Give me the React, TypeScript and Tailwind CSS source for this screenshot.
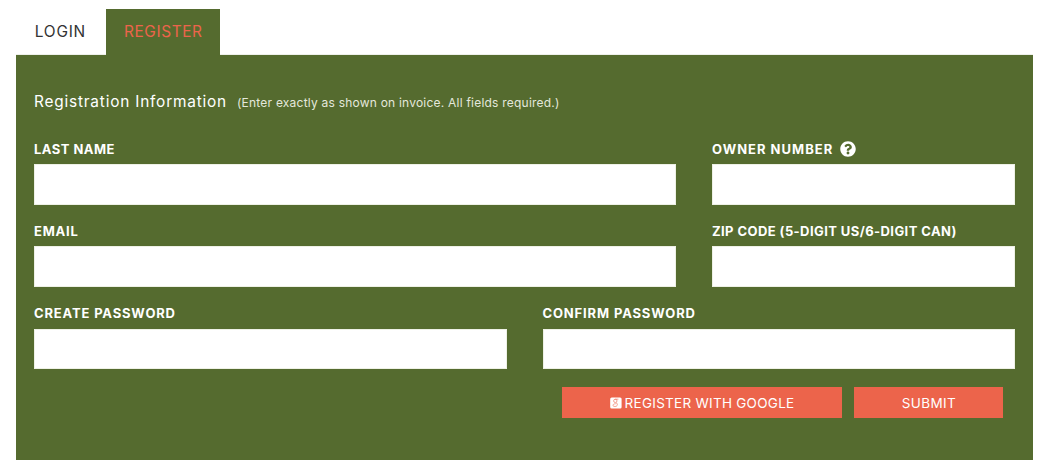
import React from "react";
import { FaQuestionCircle } from "react-icons/fa";

interface FieldProps {
  id: string;
  label: string;
  labelClassName: string;
  className: string;
  inputClassName?: string;
  type?: string;
  icon?: React.ReactNode;
}

const Field: React.FC<FieldProps> = ({
  id,
  label,
  labelClassName,
  className,
  inputClassName = "h-[41px]",
  type = "text",
  icon,
}) => (
  <div className={className}>
    <label
      htmlFor={id}
      className="flex h-[30px] items-center gap-[7px] whitespace-nowrap text-[13px] font-bold text-white"
    >
      <span className={`pt-0.5 ${labelClassName}`}>{label}</span>
      {icon}
    </label>
    <input
      id={id}
      type={type}
      className={`block w-full border border-[#eef1e6] bg-white px-3 text-sm text-gray-800 outline-none ${inputClassName}`}
    />
  </div>
);

const GoogleSquareIcon: React.FC = () => (
  <svg viewBox="0 0 12 12" className="-mt-px h-3 w-3 shrink-0" fill="none">
    <rect x="0.2" y="0.4" width="11.4" height="11.2" rx="1.5" fill="#fff" />
    <g stroke="#ec644b" strokeWidth="0.6">
      <ellipse cx="5.3" cy="3.9" rx="1.7" ry="1.6" />
      <path d="M5.2 2.2h3.2M6 5.5c2.2 1.5 1.6 4-1 4-2.8 0-2.9-2.7.8-2.8" />
    </g>
  </svg>
);

const App: React.FC = () => {
  return (
    <div className="h-[475px] bg-white pl-4 pr-[18px] pt-[9px] font-['Inter',sans-serif]">
      <div className="flex h-[46px] border-b border-[#eef0ea] text-[15.4px]">
        <button className="w-[90px] whitespace-nowrap pr-0.5 text-[#333]">
          <span className="-mr-[0.8px] tracking-[0.8px]">LOGIN</span>
        </button>
        <button className="h-[46px] w-[114px] whitespace-nowrap bg-[#556b2f] text-[#ec644b]">
          <span className="-mr-[0.6px] tracking-[0.6px]">REGISTER</span>
        </button>
      </div>

      <form className="h-[405px] bg-[#556b2f] px-[18px] pt-[34px]">
        <div className="flex h-[45px] items-start gap-2.5 whitespace-nowrap leading-[26px]">
          <h2 className="text-[15.4px] text-white">
            <span className="tracking-[0.8px]">Registration Information</span>
          </h2>
          <span className="pt-px text-[12px] tracking-[0.22px] text-[#e4e8dc]">
            (Enter exactly as shown on invoice. All fields required.)
          </span>
        </div>

        <div className="flex h-[82px] gap-9">
          <Field
            id="lastName"
            label="LAST NAME"
            labelClassName="tracking-[0.45px]"
            className="w-[642px]"
          />
          <Field
            id="ownerNumber"
            label="OWNER NUMBER"
            labelClassName="tracking-[1px]"
            className="w-[303px]"
            icon={<FaQuestionCircle className="h-4 w-4" />}
          />
        </div>
        <div className="flex h-[82px] gap-9">
          <Field
            id="email"
            label="EMAIL"
            labelClassName="tracking-[0.8px]"
            className="w-[642px]"
            type="email"
          />
          <Field
            id="zip"
            label="ZIP CODE (5-DIGIT US/6-DIGIT CAN)"
            labelClassName="tracking-[0.42px]"
            className="w-[303px]"
          />
        </div>
        <div className="flex h-[89px] gap-9">
          <Field
            id="password"
            label="CREATE PASSWORD"
            labelClassName="tracking-[0.84px]"
            className="flex-1"
            inputClassName="mt-px h-10"
            type="password"
          />
          <Field
            id="confirmPassword"
            label="CONFIRM PASSWORD"
            labelClassName="tracking-[0.86px]"
            className="flex-1"
            inputClassName="mt-px h-10"
            type="password"
          />
        </div>

        <div className="flex justify-end gap-3 pr-3 text-[13.5px] text-white">
          <button
            type="button"
            className="flex h-[31px] w-[280px] items-center justify-center gap-[3px] whitespace-nowrap bg-[#ec644b] pt-0.5"
          >
            <GoogleSquareIcon />
            <span className="tracking-[0.27px]">REGISTER WITH GOOGLE</span>
          </button>
          <button
            type="submit"
            className="h-[31px] w-[149px] bg-[#ec644b] pl-px pt-0.5"
          >
            <span className="tracking-[0.4px]">SUBMIT</span>
          </button>
        </div>
      </form>
    </div>
  );
};

export default App;
